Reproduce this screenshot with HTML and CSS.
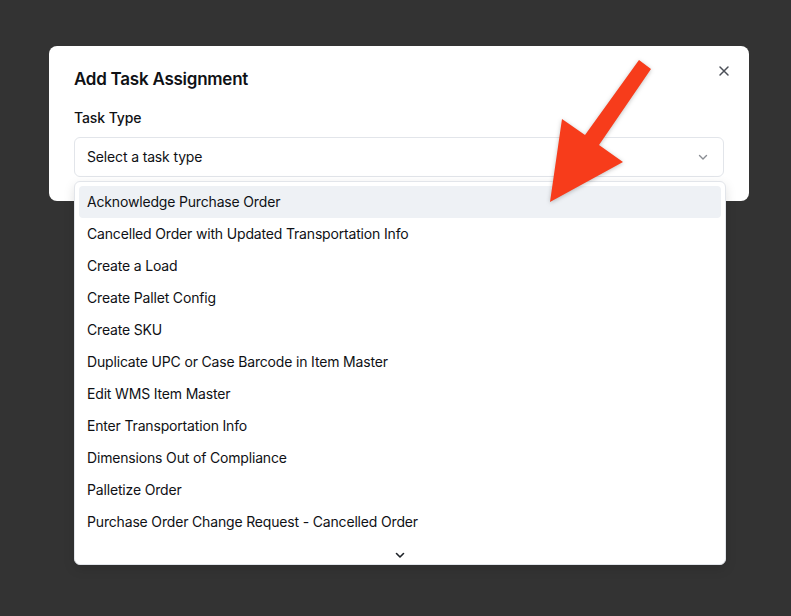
FILE: index.html
```html
<!DOCTYPE html>
<html>
    <head>
        <meta charset="utf-8">
        <title>Add Task Assignment</title>
        <link rel="stylesheet" href="styles.css">
    </head>
    <body>
    <div class="dialog">
        <button class="close" aria-label="Close">
            <svg width="16" height="16" viewBox="0 0 16 16"><path d="M4 4l8 8M12 4l-8 8" stroke="#4b4f57" stroke-width="1.5" stroke-linecap="round"/></svg>
        </button>
        <h2 class="title">Add Task Assignment</h2>
        <label class="label">Task Type</label>
        <div class="field">
            <div class="trigger">
                <span>Select a task type</span>
                <svg width="16" height="16" viewBox="0 0 16 16"><path d="M4.5 6.5l3.5 3.5 3.5-3.5" fill="none" stroke="#8a8d93" stroke-width="1.4" stroke-linecap="round" stroke-linejoin="round"/></svg>
            </div>
            <div class="menu">
                <div class="item active">Acknowledge Purchase Order</div>
                <div class="item">Cancelled Order with Updated Transportation Info</div>
                <div class="item">Create a Load</div>
                <div class="item">Create Pallet Config</div>
                <div class="item">Create SKU</div>
                <div class="item">Duplicate UPC or Case Barcode in Item Master</div>
                <div class="item">Edit WMS Item Master</div>
                <div class="item">Enter Transportation Info</div>
                <div class="item">Dimensions Out of Compliance</div>
                <div class="item">Palletize Order</div>
                <div class="item">Purchase Order Change Request - Cancelled Order</div>
                <div class="scroll">
                    <svg width="16" height="16" viewBox="0 0 16 16"><path d="M4.5 6.5l3.5 3.5 3.5-3.5" fill="none" stroke="#1f2329" stroke-width="1.6" stroke-linecap="round" stroke-linejoin="round"/></svg>
                </div>
            </div>
        </div>
    </div>
    <svg class="pointer" width="791" height="616" viewBox="0 0 791 616">
        <polygon points="639,60 651,69 599,145 623,162 550,202 562,119 585,135" fill="#f73c1b"/>
    </svg>
    </body>
</html>
```

FILE: styles.css
```css
html, body{
    margin: 0;
    height: 100%;
}
body{
    background: #333333;
    font-family: Inter, "Noto Sans", sans-serif;
    color: #0f1115;
    padding: 46px 0 0 49px;
    box-sizing: border-box;
    position: relative;
    overflow: hidden;
}
.dialog{
    position: relative;
    width: 700px;
    box-sizing: border-box;
    background: #fff;
    border-radius: 8px;
    padding: 24px 25px 24px 25px;
    display: flex;
    flex-direction: column;
}
.close{
    position: absolute;
    top: 17px;
    right: 17px;
    border: 0;
    background: none;
    padding: 0;
    width: 16px;
    height: 16px;
}
.title{
    margin: 0;
    font-size: 17px;
    line-height: 18px;
    font-weight: 600;
    letter-spacing: -0.25px;
}
.label{
    margin-top: 20px;
    font-size: 14px;
    line-height: 20px;
    font-weight: 500;
    letter-spacing: -0.1px;
}
.field{
    position: relative;
    margin-top: 9px;
}
.trigger{
    height: 40px;
    box-sizing: border-box;
    border: 1px solid #e2e5ea;
    border-radius: 6px;
    padding: 0 12px;
    display: flex;
    align-items: center;
    justify-content: space-between;
    font-size: 14px;
    letter-spacing: -0.15px;
    line-height: 18px;
}
.menu{
    position: absolute;
    top: 44px;
    left: 0;
    width: 652px;
    height: 384px;
    box-sizing: border-box;
    background: #fff;
    border: 1px solid #e2e5ea;
    border-radius: 6px;
    padding: 4px;
    box-shadow: 0 4px 12px rgba(0, 0, 0, 0.12);
    overflow: hidden;
    z-index: 2;
}
.item{
    height: 32px;
    padding: 0 8px 1px;
    box-sizing: border-box;
    border-radius: 4px;
    display: flex;
    align-items: center;
    font-size: 14px;
    letter-spacing: -0.17px;
}
.item.active{
    background: #eef1f5;
}
.scroll{
    height: 34px;
    display: flex;
    align-items: center;
    justify-content: center;
}
.pointer{
    position: absolute;
    top: 0;
    left: 0;
    z-index: 5;
    filter: drop-shadow(0 1px 2px rgba(0, 0, 0, 0.25));
}
```
